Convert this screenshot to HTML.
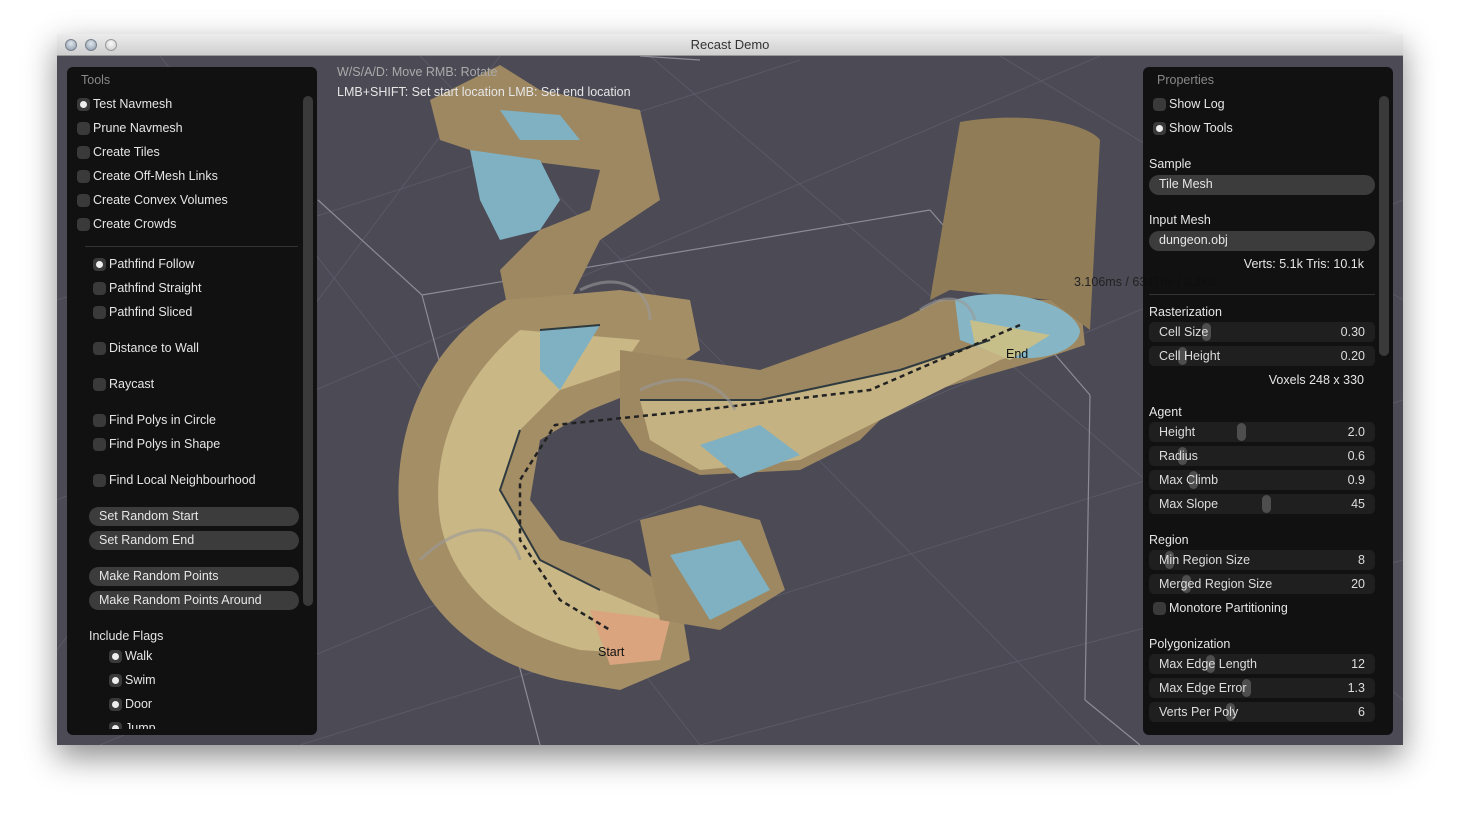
<!DOCTYPE html>
<html><head><meta charset="utf-8"><style>
*{margin:0;padding:0;box-sizing:border-box}
body{width:1460px;height:824px;background:#fff;font-family:"Liberation Sans","DejaVu Sans",sans-serif;font-size:12.5px;position:relative;overflow:hidden}
.win{position:absolute;left:57px;top:34px;width:1346px;height:711px;box-shadow:0 12px 30px rgba(0,0,0,.45);background:#4b4a55}
.tb{position:absolute;left:0;top:0;width:100%;height:22px;background:linear-gradient(#ececec,#cfcfcf);border-bottom:1px solid #999;text-align:center;line-height:22px;color:#333;font-size:13px}
.dot{position:absolute;top:5px;width:12px;height:12px;border-radius:50%;background:radial-gradient(circle at 50% 35%,#dfe6ee,#8a98a8);border:1px solid #7a828c}
.view{position:absolute;left:0;top:22px;width:1346px;height:689px;overflow:hidden}
.panel{position:absolute;top:67px;width:250px;height:668px;background:rgba(14,14,14,.95);border-radius:6px}
.t{position:absolute;color:#e6e6e6;white-space:nowrap}
.h{color:#888}
.cb{position:absolute;width:13px;height:13px;border-radius:4px;background:#3a3a3a}
.cb.on::after{content:"";position:absolute;left:3px;top:3px;width:7px;height:7px;border-radius:50%;background:#eee}
.btn{position:absolute;height:19px;border-radius:10px;background:#3c3c3c;color:#e6e6e6;line-height:19px;padding-left:10px}
.sl{position:absolute;left:6px;width:226px;height:20px;border-radius:5px;background:#1f1f1f;color:#ddd;line-height:20px;padding:0 10px}
.sl b{font-weight:normal;position:relative;z-index:2}
.sl span{float:right;position:relative;z-index:2}
.th{position:absolute;top:1px;width:9px;height:18px;border-radius:5px;background:#4e4e4e;z-index:1}
.sb{position:absolute;width:10px;border-radius:5px;background:#3a3a3a}
</style></head><body>
<div class="win">
<div class="tb">Recast Demo<div class="dot" style="left:8px"></div><div class="dot" style="left:28px"></div><div class="dot" style="left:48px;background:radial-gradient(circle at 50% 35%,#fafafa,#c8c8c8);border-color:#999"></div></div>
<div class="view">
<svg width="1346" height="689" viewBox="57 56 1346 689" style="position:absolute;left:0;top:0">
<g stroke="#5a5966" stroke-width="1" fill="none">
<path d="M57 300L800 60M57 500L1100 56M100 745L1403 200M300 745L1403 400M700 745L1403 560M160 56L700 745M420 56L1100 745M650 56L1403 700M1000 56L1403 300M57 650L500 56"/>
</g>
<g stroke="#8d8c96" stroke-width="1.2" fill="none">
<path d="M422 295L930 210M422 295L540 745M1090 395L1085 700M422 295L318 200M930 210L1090 395M700 60L640 56M1085 700L1140 745"/>
</g>
<path d="M430 100 L500 65 L540 90 L640 110 L660 200 L600 240 L570 300 L510 320 L500 270 L540 230 L590 210 L600 170 L520 160 L470 150 L440 140Z" fill="#9d8862"/>
<path d="M470 150 L540 160 L560 200 L540 230 L500 240 L480 200Z" fill="#7fb1c2"/>
<path d="M500 110 L560 115 L580 140 L520 140Z" fill="#7fb1c2"/>
<path d="M505 300 C430 340 390 430 400 520 C410 600 470 660 560 680 L620 690 L690 660 L680 600 L630 560 L560 540 L530 500 L540 440 L590 410 L640 390 L700 350 L690 300 L620 290Z" fill="#a48e66"/>
<path d="M520 330 C460 380 430 450 440 520 C450 580 500 630 580 650 L660 655 L670 620 L600 590 L540 560 L500 490 L520 430 L560 390 L620 370 L640 340Z" fill="#c9b785"/>
<path d="M540 330 L600 325 L560 390 L540 370Z" fill="#7fb1c2"/>
<path d="M590 610 L670 620 L660 660 L610 665Z" fill="#d9a47e"/>
<path d="M620 350 L760 370 L900 320 L940 300 L1080 300 L1085 345 L1040 360 L900 400 L860 440 L800 470 L700 475 L640 450 L620 420Z" fill="#9d8862"/>
<path d="M640 400 L760 400 L900 370 L990 340 L1050 345 L1000 360 L880 420 L800 460 L700 470 L650 440Z" fill="#c4b282"/>
<path d="M700 445 L760 425 L800 455 L740 478Z" fill="#7fb1c2"/>
<path d="M960 122 C1030 110 1090 125 1100 140 L1090 330 L1050 300 L950 290 L930 300 Z" fill="#907c57"/>
<path d="M955 300 C1000 285 1070 300 1080 330 C1080 350 1040 365 1000 355 L960 340Z" fill="#86b6c6"/>
<path d="M970 320 L1050 335 L1010 360 L975 345Z" fill="#c7bf8a"/>
<path d="M640 520 L700 505 L760 520 L785 590 L720 630 L660 620Z" fill="#9d8862"/>
<path d="M670 555 L740 540 L770 590 L710 620Z" fill="#7fb1c2"/>
<g stroke="#2f3a3f" stroke-width="2" fill="none"><path d="M540 330 L600 325 M640 400 L760 400 L900 370 L990 340 M520 430 L500 490 L540 560 L600 590"/></g>
<g stroke="#222" stroke-width="2.5" stroke-dasharray="5 4" fill="none"><path d="M1020 325 L870 390 L700 410 L555 425 L520 480 L520 540 L560 600 L610 630"/></g>
<g fill="none" stroke="#999" stroke-width="3" opacity=".6"><path d="M420 560 C460 520 510 520 520 560"/><path d="M580 290 C620 270 650 290 650 320"/><path d="M920 310 C950 290 970 300 975 320"/><path d="M640 390 C680 370 720 380 735 410"/></g>
<text x="598" y="656" font-size="12.5" fill="#111" font-family="Liberation Sans">Start</text>
<text x="1006" y="358" font-size="12.5" fill="#111" font-family="Liberation Sans">End</text>
<text x="1074" y="286" font-size="12.5" fill="#222" font-family="Liberation Sans">3.106ms / 634Tris / 0.3kB</text>
</svg>
</div>
</div>
<div class="t h" style="left:337px;top:65px;color:#aaa">W/S/A/D: Move  RMB: Rotate</div>
<div class="t" style="left:337px;top:85px">LMB+SHIFT: Set start location  LMB: Set end location</div>

<div class="panel" style="left:67px">
<div class="t h" style="left:14px;top:6px">Tools</div>
<div class="cb on" style="left:10px;top:31px"></div><div class="t" style="left:26px;top:30px">Test Navmesh</div>
<div class="cb" style="left:10px;top:55px"></div><div class="t" style="left:26px;top:54px">Prune Navmesh</div>
<div class="cb" style="left:10px;top:79px"></div><div class="t" style="left:26px;top:78px">Create Tiles</div>
<div class="cb" style="left:10px;top:103px"></div><div class="t" style="left:26px;top:102px">Create Off-Mesh Links</div>
<div class="cb" style="left:10px;top:127px"></div><div class="t" style="left:26px;top:126px">Create Convex Volumes</div>
<div class="cb" style="left:10px;top:151px"></div><div class="t" style="left:26px;top:150px">Create Crowds</div>
<div style="position:absolute;left:18px;top:179px;width:213px;height:1px;background:#333"></div>
<div class="cb on" style="left:26px;top:191px"></div><div class="t" style="left:42px;top:190px">Pathfind Follow</div>
<div class="cb" style="left:26px;top:215px"></div><div class="t" style="left:42px;top:214px">Pathfind Straight</div>
<div class="cb" style="left:26px;top:239px"></div><div class="t" style="left:42px;top:238px">Pathfind Sliced</div>
<div class="cb" style="left:26px;top:275px"></div><div class="t" style="left:42px;top:274px">Distance to Wall</div>
<div class="cb" style="left:26px;top:311px"></div><div class="t" style="left:42px;top:310px">Raycast</div>
<div class="cb" style="left:26px;top:347px"></div><div class="t" style="left:42px;top:346px">Find Polys in Circle</div>
<div class="cb" style="left:26px;top:371px"></div><div class="t" style="left:42px;top:370px">Find Polys in Shape</div>
<div class="cb" style="left:26px;top:407px"></div><div class="t" style="left:42px;top:406px">Find Local Neighbourhood</div>
<div class="btn" style="left:22px;top:440px;width:210px">Set Random Start</div>
<div class="btn" style="left:22px;top:464px;width:210px">Set Random End</div>
<div class="btn" style="left:22px;top:500px;width:210px">Make Random Points</div>
<div class="btn" style="left:22px;top:524px;width:210px">Make Random Points Around</div>
<div class="t" style="left:22px;top:562px">Include Flags</div>
<div class="cb on" style="left:42px;top:583px"></div><div class="t" style="left:58px;top:582px">Walk</div>
<div class="cb on" style="left:42px;top:607px"></div><div class="t" style="left:58px;top:606px">Swim</div>
<div class="cb on" style="left:42px;top:631px"></div><div class="t" style="left:58px;top:630px">Door</div>
<div style="position:absolute;left:0;top:654px;width:250px;height:8px;overflow:hidden"><div class="cb on" style="left:42px;top:1px"></div><div class="t" style="left:58px;top:0px">Jump</div></div>
<div class="sb" style="left:236px;top:29px;height:510px"></div>
</div>

<div class="panel" style="left:1143px">
<div class="t h" style="left:14px;top:6px">Properties</div>
<div class="cb" style="left:10px;top:31px"></div><div class="t" style="left:26px;top:30px">Show Log</div>
<div class="cb on" style="left:10px;top:55px"></div><div class="t" style="left:26px;top:54px">Show Tools</div>
<div class="t" style="left:6px;top:90px">Sample</div>
<div class="btn" style="left:6px;top:108px;width:226px;height:20px">Tile Mesh</div>
<div class="t" style="left:6px;top:146px">Input Mesh</div>
<div class="btn" style="left:6px;top:164px;width:226px;height:20px">dungeon.obj</div>
<div class="t" style="right:29px;top:190px">Verts: 5.1k  Tris: 10.1k</div>
<div style="position:absolute;left:6px;top:227px;width:226px;height:1px;background:#333"></div>
<div class="t" style="left:6px;top:238px">Rasterization</div>
<div class="sl" style="top:255px"><b>Cell Size</b><span>0.30</span><div class="th" style="left:53px"></div></div>
<div class="sl" style="top:279px"><b>Cell Height</b><span>0.20</span><div class="th" style="left:29px"></div></div>
<div class="t" style="right:29px;top:306px">Voxels  248 x 330</div>
<div class="t" style="left:6px;top:338px">Agent</div>
<div class="sl" style="top:355px"><b>Height</b><span>2.0</span><div class="th" style="left:88px"></div></div>
<div class="sl" style="top:379px"><b>Radius</b><span>0.6</span><div class="th" style="left:29px"></div></div>
<div class="sl" style="top:403px"><b>Max Climb</b><span>0.9</span><div class="th" style="left:40px"></div></div>
<div class="sl" style="top:427px"><b>Max Slope</b><span>45</span><div class="th" style="left:113px"></div></div>
<div class="t" style="left:6px;top:466px">Region</div>
<div class="sl" style="top:483px"><b>Min Region Size</b><span>8</span><div class="th" style="left:16px"></div></div>
<div class="sl" style="top:507px"><b>Merged Region Size</b><span>20</span><div class="th" style="left:33px"></div></div>
<div class="cb" style="left:10px;top:535px"></div><div class="t" style="left:26px;top:534px">Monotore Partitioning</div>
<div class="t" style="left:6px;top:570px">Polygonization</div>
<div class="sl" style="top:587px"><b>Max Edge Length</b><span>12</span><div class="th" style="left:57px"></div></div>
<div class="sl" style="top:611px"><b>Max Edge Error</b><span>1.3</span><div class="th" style="left:93px"></div></div>
<div class="sl" style="top:635px"><b>Verts Per Poly</b><span>6</span><div class="th" style="left:77px"></div></div>
<div class="sb" style="left:236px;top:29px;height:260px"></div>
</div>
</body></html>
